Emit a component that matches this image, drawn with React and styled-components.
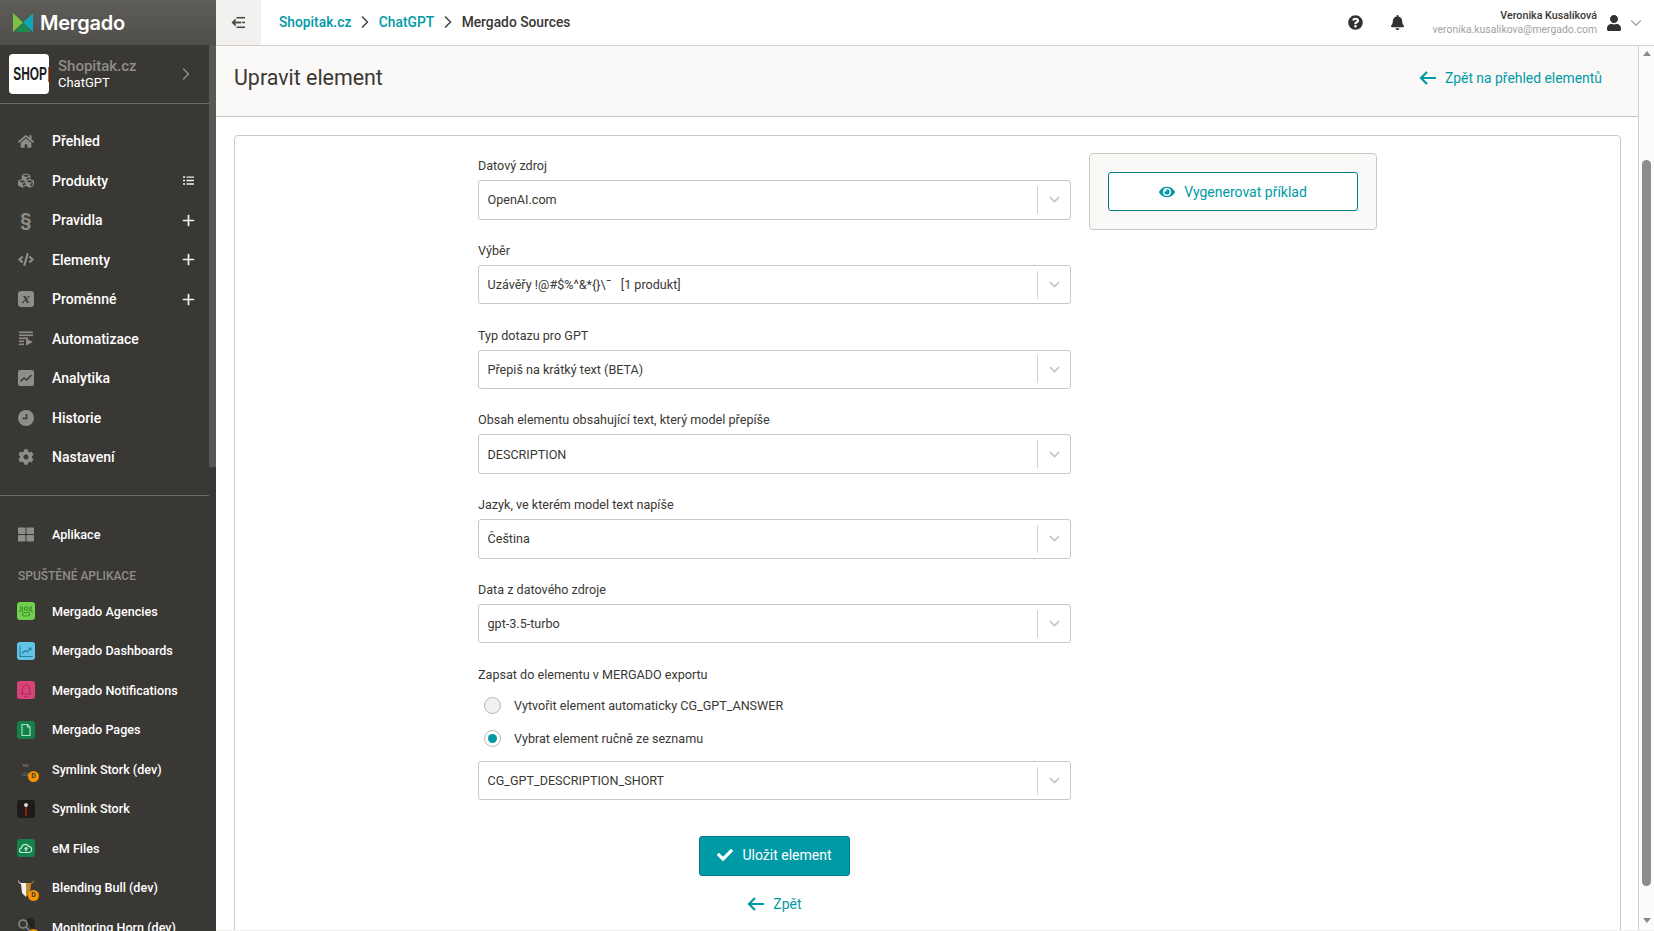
import styled, { createGlobalStyle } from 'styled-components';
import { FaHome, FaCubes, FaCode, FaCog, FaThLarge, FaQuestionCircle, FaBell, FaUser, FaCheck, FaEye, FaListUl } from 'react-icons/fa';
import { ChevronDown, ChevronRight, Plus } from 'lucide-react';

const TEAL = '#009aa6';
const DARK = '#3a3835';
const LINE = '#cbc8c3';

const GlobalStyle = createGlobalStyle`
  html, body {
    margin: 0;
    height: 100%;
    overflow: hidden;
    background: #fff;
    font-family: Roboto, "Liberation Sans", sans-serif;
    color: ${DARK};
  }
  * { box-sizing: border-box; }
`;

const ParagraphMark = styled.span`
  font-size: 18px;
  font-weight: 700;
  line-height: 18px;
`;

const VariableMark = styled.span`
  width: 16px;
  height: 16px;
  border-radius: 3px;
  background: #8f8d8a;
  color: ${DARK};
  font-family: "Liberation Serif", serif;
  font-style: italic;
  font-weight: 700;
  font-size: 15px;
  line-height: 14px;
  text-align: center;
`;

const AutomationIcon = () => (
  <svg viewBox="0 0 16 16" width="16" height="16" fill="currentColor">
    <rect x="1" y="0.500" width="14" height="1.600" />
    <rect x="1" y="3.500" width="14" height="1.600" />
    <rect x="1" y="6.500" width="9" height="1.600" />
    <rect x="1" y="9.500" width="5" height="1.600" />
    <rect x="1" y="12.500" width="5" height="1.600" />
    <path d="M8 7.500v7l7-3.500z" />
  </svg>
);
const AnalyticsIcon = () => (
  <svg viewBox="0 0 16 16" width="16" height="16">
    <rect width="16" height="16" rx="2" fill="currentColor" />
    <path d="M2.500 11.500 6 8l2.500 2 5-5" stroke={DARK} strokeWidth="1.500" fill="none" />
  </svg>
);
const ClockIcon = () => (
  <svg viewBox="0 0 16 16" width="16" height="16">
    <circle cx="8" cy="8" r="8" fill="currentColor" />
    <path d="M8.500 4v4.500H4.500" stroke={DARK} strokeWidth="1.600" fill="none" />
  </svg>
);
const CollapseIcon = () => (
  <svg viewBox="0 0 16 14" width="15" height="13" fill="#4a4845">
    <path d="M5 2.500v9L0.500 7z" />
    <rect x="5" y="6" width="6" height="2" />
    <rect x="6" y="1" width="9" height="1.700" />
    <rect x="12" y="6.100" width="3" height="1.700" />
    <rect x="6" y="11.300" width="9" height="1.700" />
  </svg>
);
const BackArrow = () => (
  <svg viewBox="0 0 17 14" width="17" height="14" fill="none" stroke="currentColor" strokeWidth="2.200">
    <path d="M17 7H2M8 1 2 7l6 6" />
  </svg>
);

const MergadoMark = () => (
  <svg viewBox="0 0 20 19" width="20" height="19">
    <path d="M0 0 10 9.500 0 19z" fill="#7cc143" />
    <path d="M20 0 10 9.500 20 19z" fill="#12a5b5" />
    <path d="M2 19 10 9.500 18 19z" fill="#1c8a4f" />
  </svg>
);

const AgenciesGlyph = () => (
  <svg viewBox="0 0 18 18" width="18" height="18" fill="none" stroke="#3f8f2e" strokeWidth="1.100">
    <circle cx="9" cy="6.500" r="1.600" />
    <circle cx="4.500" cy="6" r="1.200" />
    <circle cx="13.500" cy="6" r="1.200" />
    <path d="M2.500 10c.5-1.500 3-1.800 4-1M15.500 10c-.5-1.500-3-1.800-4-1" />
    <rect x="5.500" y="10.500" width="7" height="3.500" rx="1.500" />
  </svg>
);
const DashboardGlyph = () => (
  <svg viewBox="0 0 18 18" width="18" height="18" fill="none" stroke="#2f7f9f" strokeWidth="1.100">
    <path d="M3 3.500v11h12.500" />
    <path d="M5 11.500 8 8.500l2 1.500 4-4M11.500 6H14v2.500" />
  </svg>
);
const BellGlyph = () => (
  <svg viewBox="0 0 18 18" width="18" height="18" fill="none" stroke="#a92a55" strokeWidth="1.200">
    <path d="M4.500 13c1-1 1-2 1-4.500C5.500 6 7 4 9 4s3.500 2 3.500 4.500c0 2.500 0 3.500 1 4.500z" />
    <path d="M7.500 15c.5.800 2.500.800 3 0" />
  </svg>
);
const PageGlyph = () => (
  <svg viewBox="0 0 18 18" width="18" height="18" fill="none" stroke="#a7dcbc" strokeWidth="1.200">
    <path d="M5 3.500h5.500L13 6v8.500H5z" />
    <path d="M10.500 3.500V6H13" />
  </svg>
);
const StorkGlyph = () => (
  <svg viewBox="0 0 18 18" width="18" height="18">
    <rect x="8.100" y="6" width="1.800" height="10" fill="#a5180f" />
    <circle cx="9" cy="5" r="2" fill="#d8d6d3" />
  </svg>
);
const CloudGlyph = () => (
  <svg viewBox="0 0 18 18" width="18" height="18" fill="none" stroke="#c3ead3" strokeWidth="1.200">
    <path d="M5 13.500c-3 0-3.500-4 -.5-4.500 0-3.500 5.500-5 7-1.500 3-.5 5 5.500.5 6z" />
    <path d="M9 12.500V8.500M7.500 10 9 8.500l1.500 1.500" />
  </svg>
);
const BullGlyph = () => (
  <svg viewBox="0 0 18 18" width="18" height="18">
    <path d="M1 0c0 3 1 4.500 3 5l1 9 4 4V4H4.500C3 4 2 3 1 0z" fill="#f3f1ee" />
    <path d="M17 0c0 3-1 4.500-3 5l-1 9-4 4V4h4.500C15 4 16 3 17 0z" fill="#c48a2c" />
  </svg>
);
const HornGlyph = () => (
  <svg viewBox="0 0 18 18" width="18" height="18">
    <circle cx="6" cy="6" r="4" fill="none" stroke="#8a8885" strokeWidth="1.600" />
    <path d="M9 9l4 4" stroke="#8a8885" strokeWidth="1.600" />
    <path d="M10 0h4c3 0 4 3 4 6v6l-5-3-3-6z" fill="#252422" />
  </svg>
);

const mainNav = [
  { label: 'Přehled', icon: <FaHome size={17} /> },
  { label: 'Produkty', icon: <FaCubes size={17} />, action: 'list' },
  { label: 'Pravidla', icon: <ParagraphMark>§</ParagraphMark>, action: 'plus' },
  { label: 'Elementy', icon: <FaCode size={17} />, action: 'plus' },
  { label: 'Proměnné', icon: <VariableMark>x</VariableMark>, action: 'plus' },
  { label: 'Automatizace', icon: <AutomationIcon /> },
  { label: 'Analytika', icon: <AnalyticsIcon /> },
  { label: 'Historie', icon: <ClockIcon /> },
  { label: 'Nastavení', icon: <FaCog size={16} /> },
];

const runningApps = [
  { label: 'Mergado Agencies', bg: '#6fd04e', glyph: <AgenciesGlyph /> },
  { label: 'Mergado Dashboards', bg: '#62c3e8', glyph: <DashboardGlyph /> },
  { label: 'Mergado Notifications', bg: '#d8447a', glyph: <BellGlyph /> },
  { label: 'Mergado Pages', bg: '#14804a', glyph: <PageGlyph /> },
  { label: 'Symlink Stork (dev)', bg: 'transparent', text: true, dev: true },
  { label: 'Symlink Stork', bg: '#1d1c1b', glyph: <StorkGlyph /> },
  { label: 'eM Files', bg: '#14804a', glyph: <CloudGlyph /> },
  { label: 'Blending Bull (dev)', bg: 'transparent', glyph: <BullGlyph />, dev: true },
  { label: 'Monitoring Horn (dev)', bg: 'transparent', glyph: <HornGlyph />, dev: true },
];

const fields = [
  { label: 'Datový zdroj', value: 'OpenAI.com' },
  { label: 'Výběr', value: 'Uzávěřy !@#$%^&*{}\\¯\u00a0\u00a0\u00a0[1 produkt]' },
  { label: 'Typ dotazu pro GPT', value: 'Přepiš na krátký text (BETA)' },
  { label: 'Obsah elementu obsahující text, který model přepíše', value: 'DESCRIPTION' },
  { label: 'Jazyk, ve kterém model text napíše', value: 'Čeština' },
  { label: 'Data z datového zdroje', value: 'gpt-3.5-turbo' },
];

const SelectBox = ({ value }) => (
  <Select>
    <SelectValue>{value}</SelectValue>
    <SelectArrow>
      <ChevronDown size={17} strokeWidth={2} />
    </SelectArrow>
  </Select>
);

export default function App() {
  return (
    <>
      <GlobalStyle />
      <Page>
        <Sidebar>
          <LogoBar>
            <MergadoMark />
            <LogoText>Mergado</LogoText>
          </LogoBar>
          <SideScroll>
            <SideInner>
              <ShopBlock>
                <ShopLogo>
                  <ShopLetters>SHOP</ShopLetters>
                  <ShopAccent />
                </ShopLogo>
                <ShopText>
                  <ShopName>Shopitak.cz</ShopName>
                  <ShopProject>ChatGPT</ShopProject>
                </ShopText>
                <ShopArrow><ChevronRight size={20} strokeWidth={1.800} /></ShopArrow>
              </ShopBlock>
              <MainNav>
                {mainNav.map((item) => (
                  <NavItem key={item.label}>
                    <NavIcon>{item.icon}</NavIcon>
                    <NavLabel>{item.label}</NavLabel>
                    {item.action === 'plus' && <NavAction><Plus size={17} strokeWidth={2.400} /></NavAction>}
                    {item.action === 'list' && <NavAction><FaListUl size={11} /></NavAction>}
                  </NavItem>
                ))}
              </MainNav>
              <SideDivider />
              <AppsLink>
                <NavIcon><FaThLarge size={17} /></NavIcon>
                <AppLabel>Aplikace</AppLabel>
              </AppsLink>
              <SideCaption>SPUŠTĚNÉ APLIKACE</SideCaption>
              {runningApps.map((app) => (
                <AppItem key={app.label}>
                  <AppIcon $bg={app.bg}>
                    {app.text ? <TinyIconText>HD<br />ICD</TinyIconText> : app.glyph}
                    {app.dev && <DevBadge>D</DevBadge>}
                  </AppIcon>
                  <AppLabel>{app.label}</AppLabel>
                </AppItem>
              ))}
            </SideInner>
            <SideThumb />
          </SideScroll>
        </Sidebar>
        <Main>
          <TopBar>
            <Toggle><CollapseIcon /></Toggle>
            <Breadcrumbs>
              <Crumb>Shopitak.cz</Crumb>
              <CrumbSep><ChevronRight size={20} strokeWidth={2} /></CrumbSep>
              <Crumb>ChatGPT</Crumb>
              <CrumbSep><ChevronRight size={20} strokeWidth={2} /></CrumbSep>
              <CrumbCurrent>Mergado Sources</CrumbCurrent>
            </Breadcrumbs>
            <TopIcons>
              <TopIcon><FaQuestionCircle size={15} /></TopIcon>
              <TopIcon><FaBell size={15} /></TopIcon>
            </TopIcons>
            <UserBlock>
              <UserName>Veronika Kusalíková</UserName>
              <UserMail>veronika.kusalikova@mergado.com</UserMail>
            </UserBlock>
            <UserIcon><FaUser size={16} /></UserIcon>
            <UserCaret><ChevronDown size={18} strokeWidth={1.600} /></UserCaret>
          </TopBar>
          <Viewport>
            <Content>
              <PageHeader>
                <PageTitle>Upravit element</PageTitle>
                <BackLink>
                  <BackArrow />
                  Zpět na přehled elementů
                </BackLink>
              </PageHeader>
              <Card>
                <FormColumn>
                  {fields.map((field) => (
                    <Field key={field.label}>
                      <FieldLabel>{field.label}</FieldLabel>
                      <SelectBox value={field.value} />
                    </Field>
                  ))}
                  <FieldLabel>Zapsat do elementu v MERGADO exportu</FieldLabel>
                  <RadioRow>
                    <Radio />
                    <RadioLabel>Vytvořit element automaticky CG_GPT_ANSWER</RadioLabel>
                  </RadioRow>
                  <RadioRow>
                    <Radio $checked />
                    <RadioLabel>Vybrat element ručně ze seznamu</RadioLabel>
                  </RadioRow>
                  <LastSelect>
                    <SelectBox value="CG_GPT_DESCRIPTION_SHORT" />
                  </LastSelect>
                  <Actions>
                    <SaveButton><FaCheck size={16} />Uložit element</SaveButton>
                    <BackSmall><BackArrow />Zpět</BackSmall>
                  </Actions>
                </FormColumn>
                <SidePanel>
                  <GenerateButton><FaEye size={16} />Vygenerovat příklad</GenerateButton>
                </SidePanel>
              </Card>
            </Content>
            <Scrollbar>
              <ScrollArrow $up />
              <ScrollThumb />
              <ScrollArrow />
            </Scrollbar>
          </Viewport>
        </Main>
      </Page>
    </>
  );
}

const Page = styled.div`
  display: flex;
  width: 1654px;
  height: 931px;
  overflow: hidden;
`;

const Sidebar = styled.aside`
  width: 216px;
  flex: none;
  display: flex;
  flex-direction: column;
  background: ${DARK};
`;

const LogoBar = styled.div`
  height: 45px;
  flex: none;
  display: flex;
  align-items: center;
  gap: 7px;
  padding-left: 13px;
  background: linear-gradient(#5f5d5a, #504e4b);
`;

const LogoText = styled.span`
  font-family: Inter, sans-serif;
  font-weight: 600;
  font-size: 20px;
  letter-spacing: -0.2px;
  color: #fff;
`;

const SideScroll = styled.div`
  flex: 1;
  display: flex;
  min-height: 0;
  overflow: hidden;
`;

const SideInner = styled.div`
  width: 209px;
  flex: none;
`;

const SideThumb = styled.div`
  width: 7px;
  height: 422px;
  flex: none;
  background: #5a5855;
`;

const ShopBlock = styled.div`
  height: 59px;
  display: flex;
  align-items: center;
  padding: 0 0 0 9px;
  border-bottom: 1px solid #6a6865;
`;

const ShopLogo = styled.div`
  width: 40px;
  height: 40px;
  flex: none;
  display: flex;
  align-items: center;
  justify-content: flex-end;
  background: #fff;
  border-radius: 4px;
  overflow: hidden;
`;

const ShopLetters = styled.span`
  display: block;
  color: #1c1c1c;
  font-family: "Liberation Sans", sans-serif;
  font-weight: 700;
  font-size: 18px;
  transform: scaleX(0.66);
  transform-origin: right center;
`;

const ShopAccent = styled.i`
  width: 1px;
  height: 15px;
  flex: none;
  margin: 0 0 0 1px;
  background: #e8541c;
`;

const ShopText = styled.div`
  margin-left: 9px;
  flex: 1;
`;

const ShopName = styled.div`
  font-size: 15px;
  font-weight: 500;
  line-height: 17px;
  color: #8f8d8a;
`;

const ShopProject = styled.div`
  font-size: 13px;
  line-height: 16px;
  color: #fff;
`;

const ShopArrow = styled.div`
  width: 20px;
  margin-right: 13px;
  display: flex;
  color: #8f8d8a;
`;

const MainNav = styled.nav`
  padding-top: 17.400px;
`;

const NavItem = styled.div`
  height: 39.5px;
  display: flex;
  align-items: center;
  padding-left: 18px;
`;

const NavIcon = styled.div`
  width: 16px;
  height: 18px;
  flex: none;
  display: flex;
  align-items: center;
  justify-content: center;
  color: #8f8d8a;
`;

const NavLabel = styled.span`
  margin-left: 18px;
  flex: 1;
  font-size: 14px;
  font-weight: 500;
  color: #fff;
`;

const NavAction = styled.div`
  width: 17px;
  margin-right: 12px;
  display: flex;
  justify-content: center;
  color: #f2f1ef;
`;

const SideDivider = styled.div`
  height: 1px;
  margin-top: 18.600px;
  background: #6a6865;
`;

const AppsLink = styled.div`
  height: 39.500px;
  margin-top: 18.500px;
  display: flex;
  align-items: center;
  gap: 1px;
  padding-left: 18px;
`;

const SideCaption = styled.div`
  margin: 14.500px 0 8.300px 18px;
  font-size: 12px;
  line-height: 14px;
  font-weight: 500;
  color: #8f8d8a;
`;

const AppItem = styled.div`
  height: 39.500px;
  display: flex;
  align-items: center;
  padding-left: 17px;
`;

const AppIcon = styled.div`
  position: relative;
  width: 18px;
  height: 18px;
  flex: none;
  border-radius: 3px;
  background: ${(p) => p.$bg};
`;

const TinyIconText = styled.div`
  padding-top: 1px;
  text-align: center;
  font-size: 4px;
  line-height: 9px;
  color: #9a9895;
  letter-spacing: 0.4px;
`;

const DevBadge = styled.span`
  position: absolute;
  right: -4px;
  bottom: -4px;
  width: 11px;
  height: 11px;
  border-radius: 50%;
  background: #f59300;
  color: ${DARK};
  font-size: 7px;
  font-weight: 700;
  line-height: 11px;
  text-align: center;
`;

const AppLabel = styled.span`
  margin-left: 17px;
  font-size: 12.600px;
  font-weight: 500;
  color: #fff;
`;

const Main = styled.main`
  flex: 1;
  min-width: 0;
  display: flex;
  flex-direction: column;
  border-bottom: 1px solid #f1f0ee;
`;

const TopBar = styled.header`
  height: 46px;
  flex: none;
  display: flex;
  align-items: center;
  border-bottom: 1px solid #d3d0cc;
`;

const Toggle = styled.div`
  width: 45px;
  height: 45px;
  display: flex;
  align-items: center;
  justify-content: center;
  background: #f2f1ef;
`;

const Breadcrumbs = styled.div`
  flex: 1;
  display: flex;
  align-items: center;
  padding: 0 0 1px 18px;
  font-size: 13.800px;
  font-weight: 500;
`;

const Crumb = styled.span`
  color: ${TEAL};
`;

const CrumbSep = styled.span`
  display: flex;
  margin: 0 4px 0 3.500px;
  color: #4a4845;
`;

const CrumbCurrent = styled.span`
  color: ${DARK};
`;

const TopIcons = styled.div`
  display: flex;
  gap: 27px;
  margin-right: 28px;
`;

const TopIcon = styled.div`
  display: flex;
  color: #33312f;
`;

const UserBlock = styled.div`
  text-align: right;
`;

const UserName = styled.div`
  font-size: 10.700px;
  font-weight: 500;
  line-height: 14px;
  color: ${DARK};
`;

const UserMail = styled.div`
  font-size: 10.400px;
  line-height: 13px;
  color: #a3a19e;
`;

const UserIcon = styled.div`
  display: flex;
  margin-left: 9px;
  color: #33312f;
`;

const UserCaret = styled.div`
  display: flex;
  margin: 0 9px 0 5px;
  color: #a3a19e;
`;

const Viewport = styled.div`
  flex: 1;
  min-height: 0;
  display: flex;
`;

const Content = styled.div`
  flex: 1;
  min-width: 0;
  overflow: hidden;
  border-right: 1px solid #d3d0cc;
`;

const PageHeader = styled.div`
  height: 71px;
  display: flex;
  align-items: center;
  justify-content: space-between;
  padding: 0 36px 7px 18px;
  background: #faf9f7;
  border-bottom: 1px solid ${LINE};
`;

const PageTitle = styled.h1`
  margin: 0;
  font-size: 21.400px;
  font-weight: 400;
  color: ${DARK};
`;

const BackLink = styled.a`
  display: flex;
  align-items: center;
  gap: 9px;
  font-size: 13.900px;
  color: ${TEAL};
`;

const Card = styled.section`
  display: flex;
  align-items: flex-start;
  margin: 18px 17px 0 18px;
  height: 900px;
  padding: 17px 0 0 243px;
  border: 1px solid ${LINE};
  border-radius: 4px;
  background: #fff;
`;

const FormColumn = styled.div`
  width: 593px;
  flex: none;
  padding-top: 3px;
`;

const Field = styled.div`
  margin-bottom: 21.300px;
`;

const FieldLabel = styled.div`
  height: 24px;
  font-size: 12.600px;
  line-height: 20px;
  color: ${DARK};
`;

const Select = styled.div`
  height: 39.500px;
  display: flex;
  align-items: center;
  border: 1px solid ${LINE};
  border-radius: 3px;
  background: #fff;
`;

const SelectValue = styled.span`
  flex: 1;
  padding-left: 8.500px;
  font-size: 12.600px;
  color: ${DARK};
`;

const SelectArrow = styled.span`
  width: 33px;
  height: 28px;
  display: flex;
  align-items: center;
  justify-content: center;
  border-left: 1px solid #d3d0cc;
  color: #c6c4c0;
`;

const RadioRow = styled.div`
  height: 33px;
  display: flex;
  align-items: center;
  padding-left: 6px;
`;

const Radio = styled.span`
  position: relative;
  width: 17px;
  height: 17px;
  border-radius: 50%;
  border: 1px solid #b9b7b3;
  background: ${(p) => (p.$checked ? '#fff' : '#f2f1ef')};

  &::after {
    content: '';
    display: ${(p) => (p.$checked ? 'block' : 'none')};
    position: absolute;
    inset: 3px;
    border-radius: 50%;
    background: ${TEAL};
  }
`;

const RadioLabel = styled.span`
  margin-left: 13px;
  font-size: 12.600px;
  color: ${DARK};
`;

const LastSelect = styled.div`
  margin-top: 6px;
`;

const Actions = styled.div`
  display: flex;
  flex-direction: column;
  align-items: center;
  margin-top: 35.500px;
`;

const SaveButton = styled.button`
  width: 151px;
  height: 40px;
  display: flex;
  align-items: center;
  justify-content: center;
  gap: 9px;
  padding: 0 0 2px;
  border: 1px solid #007f8a;
  border-radius: 3px;
  background: ${TEAL};
  color: #fff;
  font-family: inherit;
  font-size: 14px;
`;

const BackSmall = styled.a`
  display: flex;
  align-items: center;
  gap: 9px;
  margin-top: 20px;
  font-size: 14px;
  color: ${TEAL};
`;

const SidePanel = styled.div`
  width: 288px;
  height: 77px;
  flex: none;
  margin: 0 0 0 18px;
  padding: 18px;
  border: 1px solid ${LINE};
  border-radius: 4px;
  background: #faf9f7;
`;

const GenerateButton = styled.button`
  width: 250px;
  height: 39px;
  display: flex;
  align-items: center;
  justify-content: center;
  gap: 9px;
  padding: 0;
  border: 1px solid #007f8a;
  border-radius: 3px;
  background: #fff;
  color: ${TEAL};
  font-family: inherit;
  font-size: 14px;
`;

const Scrollbar = styled.div`
  width: 15px;
  flex: none;
  display: flex;
  flex-direction: column;
  align-items: center;
  background: #fcfcfc;
`;

const ScrollArrow = styled.span`
  width: 0;
  height: 0;
  margin: ${(p) => (p.$up ? '5px 0 0' : 'auto 0 7px')};
  border-left: 4.500px solid transparent;
  border-right: 4.500px solid transparent;
  border-bottom: ${(p) => (p.$up ? '5px solid #8a8a8a' : '0')};
  border-top: ${(p) => (p.$up ? '0' : '5px solid #8a8a8a')};
`;

const ScrollThumb = styled.div`
  width: 9px;
  height: 726px;
  margin-top: 104px;
  border-radius: 5px;
  background: #8c8c8c;
`;
